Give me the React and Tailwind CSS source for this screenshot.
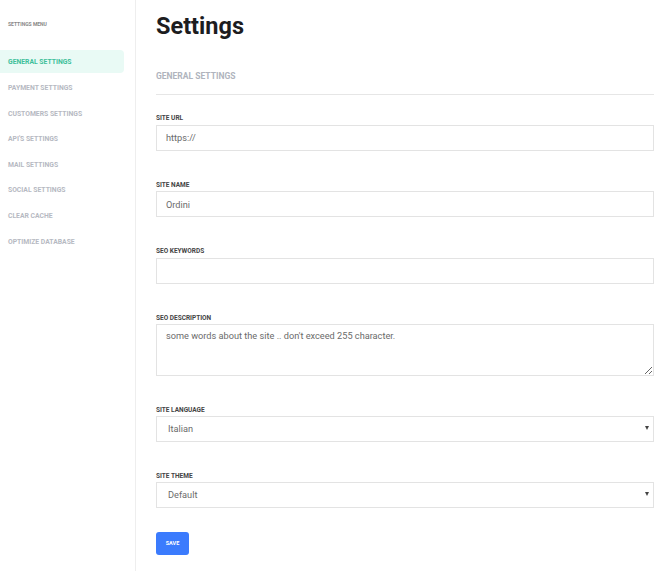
import React from 'react';

const menu = [
  'General Settings',
  'Payment Settings',
  'Customers Settings',
  "API'S Settings",
  'Mail Settings',
  'Social Settings',
  'Clear Cache',
  'Optimize Database',
];

const Label = ({ children }) => (
  <div className="text-[6.5px] leading-[9px] font-bold uppercase text-[#444] mb-[1px]">{children}</div>
);

const inputCls =
  'w-full h-[26px] border border-[#e3e3e3] bg-white px-[9px] text-[9.2px] text-[#6b6b6b] outline-none';

const Select = ({ value }) => (
  <div className="relative">
    <div className={`${inputCls} flex items-center pl-[11px]`}>{value}</div>
    <span className="absolute right-[5px] top-[10px] border-l-[2.5px] border-r-[2.5px] border-t-[4px] border-l-transparent border-r-transparent border-t-[#444]" />
  </div>
);

export default function App() {
  return (
    <div className="flex min-h-[571px] bg-white" style={{ fontFamily: 'Roboto, "Liberation Sans", sans-serif' }}>
      {/* Sidebar */}
      <aside className="w-[136px] shrink-0 border-r border-[#eeeeee] pt-[21px]">
        <div className="px-2 text-[5px] leading-[6px] font-bold uppercase text-[#888]">Settings Menu</div>
        <nav className="mt-[23px] flex flex-col gap-[2.6px] pr-[11px]">
          {menu.map((m, i) => (
            <div
              key={m}
              className={`h-[23px] flex items-center px-2 pt-[2px] text-[6.8px] font-bold uppercase rounded-r-[4px] ${
                i === 0 ? 'bg-[#e9faf5] text-[#3ebf9a]' : 'text-[#b6b9c2]'
              }`}
            >
              {m}
            </div>
          ))}
        </nav>
      </aside>

      {/* Main */}
      <main className="flex-1 pl-[20px] pr-[6px] pt-[12px]">
        <h1 className="text-[23.5px] leading-[28px] font-bold text-[#1d1d1f]">Settings</h1>
        <div className="mt-[31px] text-[8.5px] leading-[10px] font-bold uppercase text-[#b0b4bd]">General Settings</div>
        <div className="mt-[13px] border-t border-[#e6e6e6]" />

        <div className="mt-[19px] flex flex-col gap-[30px]">
          <div>
            <Label>Site URL</Label>
            <input className={inputCls} defaultValue="https://" />
          </div>
          <div>
            <Label>Site Name</Label>
            <input className={inputCls} defaultValue="Ordini" />
          </div>
          <div>
            <Label>SEO Keywords</Label>
            <input className={inputCls} defaultValue="" />
          </div>
          <div>
            <Label>SEO Description</Label>
            <textarea
              className="block w-full h-[52px] border border-[#e3e3e3] bg-white px-[9px] pt-[5px] text-[9.2px] leading-[12px] text-[#6b6b6b] outline-none"
              defaultValue="some words about the site .. don't exceed 255 character."
            />
          </div>
          <div>
            <Label>Site Language</Label>
            <Select value="Italian" />
          </div>
          <div>
            <Label>Site Theme</Label>
            <Select value="Default" />
          </div>
        </div>

        <button className="mt-[24px] w-[33px] h-[23px] rounded-[3px] bg-[#3b7bfd] text-white text-[5.5px] font-bold uppercase">
          Save
        </button>
      </main>
    </div>
  );
}
